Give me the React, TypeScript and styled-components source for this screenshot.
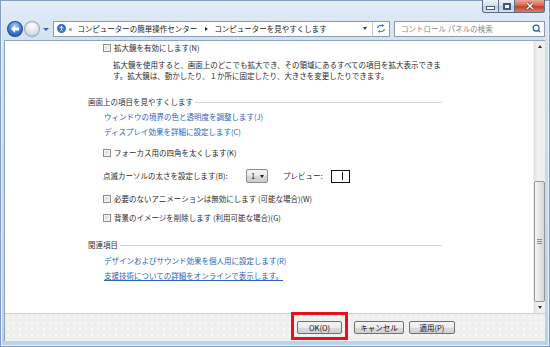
import styled, { createGlobalStyle } from "styled-components";
import { Search } from "lucide-react";

const GlobalStyle = createGlobalStyle`
  html, body {
    margin: 0;
    padding: 0;
    overflow: hidden;
    background: #fff;
  }
  body {
    font-family: "Noto Sans CJK JP", "Noto Sans", sans-serif;
  }
`;

// ウィンドウ枠
const Window = styled.div`
  width: 550px;
  height: 347px;
  box-sizing: border-box;
  padding: 0 5px 6px 4px;
  display: flex;
  flex-direction: column;
  background: linear-gradient(to bottom, #e4edf8 0, #d3e1f1 40px, #bcd2ec 100%);
  box-shadow: inset 0 0 0 1px #7f9cc2, inset 0 0 0 2px #e9f1fb;
`;

const TitleBar = styled.div`
  height: 14px;
  display: flex;
  justify-content: flex-end;
`;

const CaptionButton = styled.div<{ $kind: "min" | "max" | "close" }>`
  width: ${(p) => (p.$kind === "close" ? 30 : p.$kind === "max" ? 16 : 17)}px;
  height: 13px;
  box-sizing: border-box;
  border: 1px solid #5b6f8c;
  border-top: none;
  border-left-width: ${(p) => (p.$kind === "min" ? 1 : 0)}px;
  border-radius: ${(p) =>
    p.$kind === "min" ? "0 0 0 3px" : p.$kind === "close" ? "0 0 3px 0" : "0"};
  display: flex;
  align-items: center;
  justify-content: center;
  background: ${(p) =>
    p.$kind === "close"
      ? "linear-gradient(#eaa898, #d86a53 45%, #c2402a 55%, #d9806a)"
      : "linear-gradient(#eef3f9, #d3dfee 45%, #bdcfe5 55%, #d4e2f3)"};
`;

const Bar = styled.div`
  width: 7px;
  height: 2px;
  margin-top: 3px;
  background: #fff;
  border: 1px solid #4a5a72;
`;

const Box = styled.div`
  width: 6px;
  height: 5px;
  background: #fff;
  border: 1px solid #4a5a72;
  box-shadow: inset 0 0 0 1px #4a5a72;
  box-sizing: content-box;
`;

const NavBar = styled.div`
  height: 26px;
  box-sizing: border-box;
  padding: 3px 0 0 3px;
  display: flex;
  align-items: center;
`;

const RoundButton = styled.div<{ $active?: boolean }>`
  width: 16px;
  height: 16px;
  box-sizing: border-box;
  border-radius: 50%;
  margin-right: 1px;
  display: flex;
  align-items: center;
  justify-content: center;
  border: 1px solid ${(p) => (p.$active ? "#274c86" : "#9ba7b8")};
  background: ${(p) =>
    p.$active
      ? "radial-gradient(circle at 50% 30%, #a8d2fb 0, #3b7bd6 55%, #1a4aa0 100%)"
      : "radial-gradient(circle at 50% 30%, #ffffff 0, #dde3ea 55%, #b9c3cf 100%)"};
`;

const HistoryArrow = styled.div`
  width: 0;
  height: 0;
  margin: 2px 4px 0 2px;
  border-left: 3px solid transparent;
  border-right: 3px solid transparent;
  border-top: 3px solid #2d64b8;
`;

const AddressBox = styled.div`
  width: 340px;
  height: 16px;
  box-sizing: border-box;
  border: 1px solid #8a9bb3;
  background: #fff;
  display: flex;
  align-items: center;
  padding-left: 3px;
  font-size: 7.5px;
  color: #222;
`;

const Crumb = styled.span<{ $gap?: number }>`
  margin-left: ${(p) => p.$gap ?? 0}px;
  white-space: nowrap;
`;

const Chevron = styled.span`
  width: 0;
  height: 0;
  margin: 0 6px 0 8px;
  border-top: 2.5px solid transparent;
  border-bottom: 2.5px solid transparent;
  border-left: 3px solid #222;
`;

const Spacer = styled.div`
  flex: 1;
`;

const DropArrow = styled.div`
  width: 0;
  height: 0;
  margin-right: 5px;
  border-left: 2.5px solid transparent;
  border-right: 2.5px solid transparent;
  border-top: 3px solid #1f3f73;
`;

const RefreshCell = styled.div`
  width: 16px;
  height: 100%;
  border-left: 1px solid #c3ccd8;
  display: flex;
  align-items: center;
  justify-content: center;
`;

const SearchBox = styled.div`
  width: 152px;
  height: 16px;
  margin-left: 4px;
  box-sizing: border-box;
  border: 1px solid #8a9bb3;
  background: #fff;
  display: flex;
  align-items: center;
  padding: 0 3px 0 6px;
  font-size: 7.5px;
  color: #8a8a8a;
  justify-content: space-between;
`;

// クライアント領域
const Client = styled.div`
  flex: 1;
  display: flex;
  flex-direction: column;
  border-top: 1px solid #8ea3bd;
  border-left: 1px solid #8ea3bd;
`;

const Pane = styled.div`
  height: 272px;
  display: flex;
  background: #fff;
`;

const Content = styled.div`
  flex: 1;
  padding: 1px 0 0 83px;
  font-size: 7.5px;
  line-height: 12px;
  color: #2b2b2b;
`;

const Row = styled.div<{ $mt?: number; $indent?: number }>`
  display: flex;
  align-items: center;
  height: 12px;
  margin-top: ${(p) => p.$mt ?? 0}px;
  padding-left: ${(p) => p.$indent ?? 15}px;
  white-space: nowrap;
`;

const Check = styled.span`
  width: 8px;
  height: 8px;
  box-sizing: border-box;
  margin-right: 3px;
  border: 1px solid #8e8e8e;
  background: linear-gradient(135deg, #d6d6d6, #f7f7f7);
  box-shadow: inset 0 0 0 1px #f4f4f4;
`;

const Desc = styled.div`
  margin: 5px 0 0 25px;
  line-height: 11px;
  white-space: nowrap;
`;

const Heading = styled.div<{ $mt: number }>`
  width: 354px;
  margin-top: ${(p) => p.$mt}px;
  height: 12px;
  display: flex;
  align-items: center;
  color: #333;
  &::after {
    content: "";
    flex: 1;
    height: 1px;
    margin-left: 2px;
    background: #d4d4d4;
  }
`;

const Link = styled.a<{ $underline?: boolean }>`
  color: #2a62bd;
  text-decoration: ${(p) => (p.$underline ? "underline" : "none")};
  text-underline-offset: 1px;
`;

const CursorLabel = styled.span`
  width: 143px;
`;

const Select = styled.div`
  width: 22px;
  height: 14px;
  box-sizing: border-box;
  border: 1px solid #8c8c8c;
  border-radius: 2px;
  background: linear-gradient(#f4f4f4, #e9e9e9 50%, #d9d9d9 51%, #cdcdcd);
  display: flex;
  align-items: center;
  justify-content: space-between;
  padding: 0 3px 0 4px;
  color: #111;
`;

const SelectArrow = styled.span`
  width: 0;
  height: 0;
  border-left: 2px solid transparent;
  border-right: 2px solid transparent;
  border-top: 3px solid #222;
`;

const PreviewLabel = styled.span`
  margin-left: 15px;
  width: 48px;
`;

const Preview = styled.div`
  width: 19px;
  height: 13px;
  box-sizing: border-box;
  border: 1px solid #111;
  display: flex;
  align-items: center;
  justify-content: flex-end;
  padding-right: 6px;
  &::after {
    content: "";
    width: 1px;
    height: 8px;
    background: #111;
  }
`;

// スクロールバー
const ScrollBar = styled.div`
  width: 11px;
  display: flex;
  flex-direction: column;
  background: linear-gradient(90deg, #e2e2e2, #f1f1f1 40%, #ededed);
  border-left: 1px solid #efefef;
`;

const ScrollArrow = styled.div<{ $up?: boolean }>`
  height: 11px;
  display: flex;
  align-items: center;
  justify-content: center;
  &::after {
    content: "";
    width: 0;
    height: 0;
    border-left: 2.5px solid transparent;
    border-right: 2.5px solid transparent;
    ${(p) =>
      p.$up ? "border-bottom: 3px solid #333;" : "border-top: 3px solid #333;"}
  }
`;

const Track = styled.div`
  flex: 1;
  display: flex;
  flex-direction: column;
`;

const Thumb = styled.div`
  flex: 1;
  margin-top: 129px;
  box-sizing: border-box;
  border: 1px solid #979797;
  border-radius: 2px;
  background: linear-gradient(90deg, #f6f6f6, #e3e3e3 60%, #d6d6d6);
  display: flex;
  align-items: center;
  justify-content: center;
  &::after {
    content: "";
    width: 5px;
    height: 5px;
    background: repeating-linear-gradient(#8a8a8a 0 1px, transparent 1px 2px);
  }
`;

// ボタン領域
const Footer = styled.div`
  flex: 1;
  border-top: 1px solid #cfcfcf;
  display: flex;
  align-items: flex-start;
  padding-left: 286px;
  background-color: #efefef;
  background-image: radial-gradient(#fafafa 0.7px, transparent 1px);
  background-size: 6px 6px;
`;

const Highlight = styled.div`
  margin-top: -2px;
  height: 28px;
  box-sizing: border-box;
  border: 3px solid #e8101a;
  padding: 6px 3px 0 3px;
  display: flex;
  align-items: flex-start;
`;

const Button = styled.button<{ $w: number; $ml?: number }>`
  width: ${(p) => p.$w}px;
  height: 13px;
  margin: ${(p) => (p.$ml !== undefined ? "7px 0 0 " + p.$ml + "px" : "0")};
  padding: 0;
  box-sizing: border-box;
  border: 1px solid #707070;
  border-radius: 2px;
  background: linear-gradient(#f3f3f3, #ebebeb 50%, #dddddd 51%, #cfcfcf);
  font-family: inherit;
  font-size: 7.5px;
  line-height: 11px;
  color: #111;
`;

const BackArrow = () => (
  <svg width="10" height="10" viewBox="0 0 10 10">
    <path d="M1 5 L5 1.2 L5 3.6 L9 3.6 L9 6.4 L5 6.4 L5 8.8 Z" fill="#fff" />
  </svg>
);

const PanelIcon = () => (
  <svg width="9" height="9" viewBox="0 0 10 10">
    <circle cx="5" cy="5" r="4.6" fill="#2f6fd0" stroke="#1b4a98" strokeWidth="0.6" />
    <circle cx="5" cy="2.8" r="0.9" fill="#fff" />
    <path d="M2.6 4.2 H7.4 M5 4.2 V6.2 L3.6 8 M5 6.2 L6.4 8" stroke="#fff" strokeWidth="0.9" fill="none" />
  </svg>
);

const RefreshIcon = () => (
  <svg width="10" height="9" viewBox="0 0 10 9">
    <path d="M1.5 4 Q2 1.5 5 1.5 L6.5 1.5" stroke="#2a63c4" strokeWidth="1.1" fill="none" />
    <path d="M6 0 L8.2 1.5 L6 3 Z" fill="#2a63c4" />
    <path d="M8.5 5 Q8 7.5 5 7.5 L3.5 7.5" stroke="#3c9a3a" strokeWidth="1.1" fill="none" />
    <path d="M4 6 L1.8 7.5 L4 9 Z" fill="#3c9a3a" />
  </svg>
);

const CloseIcon = () => (
  <svg width="10" height="8" viewBox="0 0 10 8">
    <path d="M2 1 L8 7 M8 1 L2 7" stroke="#5a1a12" strokeWidth="2.6" />
    <path d="M2 1 L8 7 M8 1 L2 7" stroke="#fff" strokeWidth="1.6" />
  </svg>
);

export default function App() {
  return (
    <>
      <GlobalStyle />
      <Window>
        <TitleBar>
          <CaptionButton $kind="min">
            <Bar />
          </CaptionButton>
          <CaptionButton $kind="max">
            <Box />
          </CaptionButton>
          <CaptionButton $kind="close">
            <CloseIcon />
          </CaptionButton>
        </TitleBar>

        <NavBar>
          <RoundButton $active>
            <BackArrow />
          </RoundButton>
          <RoundButton />
          <HistoryArrow />
          <AddressBox>
            <PanelIcon />
            <Crumb $gap={3}>«</Crumb>
            <Crumb $gap={5}>コンピューターの簡単操作センター</Crumb>
            <Chevron />
            <Crumb>コンピューターを見やすくします</Crumb>
            <Spacer />
            <DropArrow />
            <RefreshCell>
              <RefreshIcon />
            </RefreshCell>
          </AddressBox>
          <SearchBox>
            <span>コントロール パネルの検索</span>
            <Search size={9} color="#1d56b0" strokeWidth={3} />
          </SearchBox>
        </NavBar>

        <Client>
          <Pane>
            <Content>
              <Row>
                <Check />
                拡大鏡を有効にします(N)
              </Row>
              <Desc>
                拡大鏡を使用すると、画面上のどこでも拡大でき、その領域にあるすべての項目を拡大表示できま
                <br />
                す。拡大鏡は、動かしたり、１か所に固定したり、大きさを変更したりできます。
              </Desc>

              <Heading $mt={15}>画面上の項目を見やすくします</Heading>
              <Row $mt={3} $indent={16}>
                <Link>ウィンドウの境界の色と透明度を調整します(J)</Link>
              </Row>
              <Row $mt={3} $indent={16}>
                <Link>ディスプレイ効果を詳細に設定します(C)</Link>
              </Row>
              <Row $mt={9}>
                <Check />
                フォーカス用の四角を太くします(K)
              </Row>
              <Row $mt={10} style={{ height: 14 }}>
                <CursorLabel>点滅カーソルの太さを設定します(B):</CursorLabel>
                <Select>
                  1
                  <SelectArrow />
                </Select>
                <PreviewLabel>プレビュー:</PreviewLabel>
                <Preview />
              </Row>
              <Row $mt={10}>
                <Check />
                必要のないアニメーションは無効にします (可能な場合)(W)
              </Row>
              <Row $mt={7}>
                <Check />
                背景のイメージを削除します (利用可能な場合)(G)
              </Row>

              <Heading $mt={15}>関連項目</Heading>
              <Row $mt={4} $indent={16}>
                <Link>デザインおよびサウンド効果を個人用に設定します(R)</Link>
              </Row>
              <Row $mt={3} $indent={16}>
                <Link $underline>支援技術についての詳細をオンラインで表示します。</Link>
              </Row>
            </Content>
            <ScrollBar>
              <ScrollArrow $up />
              <Track>
                <Thumb />
              </Track>
              <ScrollArrow />
            </ScrollBar>
          </Pane>
          <Footer>
            <Highlight>
              <Button $w={45}>OK(O)</Button>
            </Highlight>
            <Button $w={50} $ml={6}>
              キャンセル
            </Button>
            <Button $w={46} $ml={5}>
              適用(P)
            </Button>
          </Footer>
        </Client>
      </Window>
    </>
  );
}
